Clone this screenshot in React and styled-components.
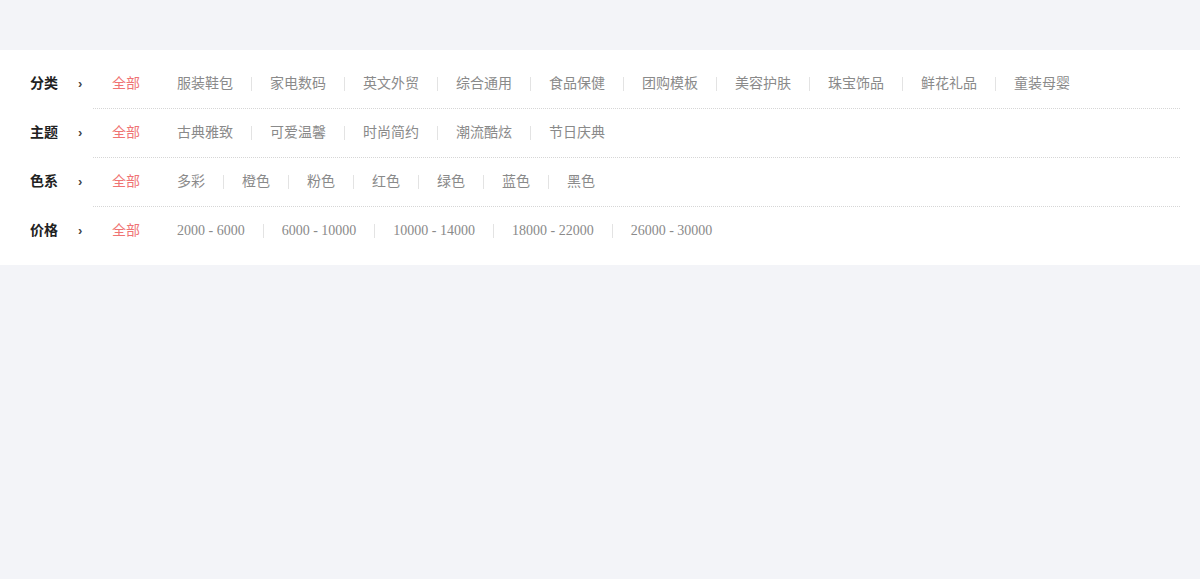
import React from "react";
import styled, { createGlobalStyle } from "styled-components";

const Global = createGlobalStyle`
  html, body { margin: 0; padding: 0; background: #f3f4f8; }
  body { font-family: "Liberation Serif", "Noto Sans CJK SC", serif; }
`;

const Page = styled.div`
  padding-top: 50px;
  min-height: 579px;
  box-sizing: border-box;
`;

const Panel = styled.div`
  background: #fff;
  padding: 10px 20px 10px 30px;
`;

const Row = styled.div`
  display: flex;
  align-items: stretch;
  height: 49px;
  &:last-child { height: 48px; }
`;

const Head = styled.div`
  width: 63px;
  flex: none;
  display: flex;
  align-items: center;
  padding-bottom: 1px;
  box-sizing: border-box;
`;

const Label = styled.span`
  font-family: "Liberation Serif", "Noto Sans CJK SC", serif;
  font-size: 14px;
  font-weight: 700;
  color: #222;
  line-height: 20px;
  width: 48px;
`;

const Arrow = styled.span`
  font-family: "Liberation Sans", sans-serif;
  font-size: 13px;
  font-weight: 700;
  color: #444;
  line-height: 20px;
`;

const List = styled.ul`
  flex: 1;
  list-style: none;
  margin: 0;
  padding: 0 0 0 1px;
  display: flex;
  align-items: center;
  border-bottom: ${(p) => (p.$last ? "1px solid transparent" : "1px dotted #d6d6d6")};
`;

const Item = styled.li`
  position: relative;
  padding: 0 18px;
  font-size: 14px;
  line-height: 20px;
  color: ${(p) => (p.$active ? "#ef7474" : "#8a8a8a")};
  white-space: nowrap;
  cursor: pointer;
  & + &::before {
    content: "";
    position: absolute;
    left: -1px;
    top: 3px;
    height: 14px;
    width: 1px;
    background: #e3e3e3;
  }
  & + & { margin-left: 1px; }
`;

const rows = [
  { label: "分类", items: ["全部", "服装鞋包", "家电数码", "英文外贸", "综合通用", "食品保健", "团购模板", "美容护肤", "珠宝饰品", "鲜花礼品", "童装母婴"] },
  { label: "主题", items: ["全部", "古典雅致", "可爱温馨", "时尚简约", "潮流酷炫", "节日庆典"] },
  { label: "色系", items: ["全部", "多彩", "橙色", "粉色", "红色", "绿色", "蓝色", "黑色"] },
  { label: "价格", items: ["全部", "2000 - 6000", "6000 - 10000", "10000 - 14000", "18000 - 22000", "26000 - 30000"] },
];

export default function App() {
  return (
    <Page>
      <Global />
      <Panel>
        {rows.map((r, ri) => (
          <Row key={r.label}>
            <Head>
              <Label>{r.label}</Label>
              <Arrow>›</Arrow>
            </Head>
            <List $last={ri === rows.length - 1}>
              {r.items.map((it, i) => (
                <Item key={it} $active={i === 0}>{it}</Item>
              ))}
            </List>
          </Row>
        ))}
      </Panel>
    </Page>
  );
}
